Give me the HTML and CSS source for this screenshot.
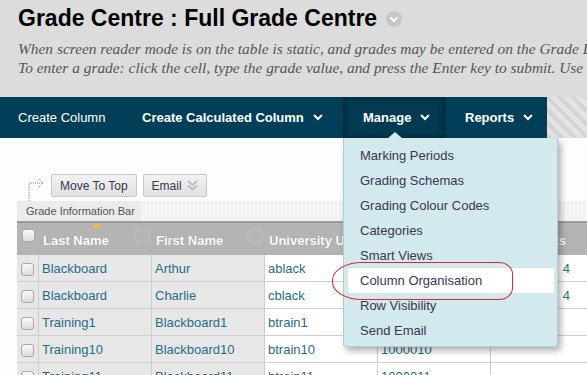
FILE: index.html
```html
<!DOCTYPE html>
<html lang="en">
<head>
  <meta charset="UTF-8" />
  <meta name="viewport" content="width=device-width, initial-scale=1.0"/>
  <title>Full Grade Centre</title>
  <link rel="stylesheet" href="styles.css">
</head>
<body>

<div class="page-header">
  <h1>Grade Centre : Full Grade Centre
    <span class="title-menu">
      <svg width="16" height="16" viewBox="0 0 16 16"><circle cx="8" cy="8" r="8" fill="#c6c6c6"/><polyline points="4.5,6.5 8,10 11.5,6.5" fill="none" stroke="#fff" stroke-width="2"/></svg>
    </span>
  </h1>
  <p class="instructions">When screen reader mode is on the table is static, and grades may be entered on the Grade Details page.<br>To enter a grade: click the cell, type the grade value, and press the Enter key to submit. Use the arrow keys to move.</p>
</div>

<div class="action-bar">
  <a class="action first">Create Column</a>
  <a class="action bold calc">Create Calculated Column <svg class="chev" width="10" height="7" viewBox="0 0 10 7"><polyline points="1,1 5,5 9,1" fill="none" stroke="#fff" stroke-width="2"/></svg></a>
  <a class="action bold tab active">Manage <svg class="chev" width="10" height="7" viewBox="0 0 10 7"><polyline points="1,1 5,5 9,1" fill="none" stroke="#fff" stroke-width="2"/></svg></a>
  <a class="action bold tab">Reports <svg class="chev" width="10" height="7" viewBox="0 0 10 7"><polyline points="1,1 5,5 9,1" fill="none" stroke="#fff" stroke-width="2"/></svg></a>
  <div class="hatch"></div>
</div>

<div class="content">
  <div class="toolbar">
    <svg class="move-arrow" width="18" height="23" viewBox="0 0 18 23">
      <polyline points="2,27 2,9 16,9" fill="none" stroke="#8a8a8a" stroke-width="1" stroke-dasharray="1 1"/>
      <polyline points="12,5 16,9 12,13" fill="none" stroke="#8a8a8a" stroke-width="1" stroke-dasharray="1 1"/>
    </svg>
    <button class="btn">Move To Top</button>
    <button class="btn">Email
      <svg class="dbl" width="11" height="11" viewBox="0 0 11 11"><polyline points="1,1 5.5,5 10,1" fill="none" stroke="#bdbdbd" stroke-width="2"/><polyline points="1,5.5 5.5,9.5 10,5.5" fill="none" stroke="#bdbdbd" stroke-width="2"/></svg>
    </button>
  </div>

  <div class="info-bar">
    <span class="info-label">Grade Information Bar</span>
    <span class="info-rest"></span>
  </div>

  <table class="grid">
    <colgroup>
      <col class="w-check"><col class="w-col"><col class="w-col"><col class="w-col"><col class="w-col"><col class="w-last"><col class="w-rest">
    </colgroup>
    <thead>
      <tr>
        <th class="chk"><span class="box"></span></th>
        <th class="sorted">Last Name<span class="sort-mark"></span><span class="sort-ico"></span></th>
        <th>First Name<span class="sort-ico"></span></th>
        <th>University Username</th>
        <th>Student ID</th>
        <th class="right">Attempts</th>
        <th class="rest"></th>
      </tr>
    </thead>
    <tbody>
      <tr><td class="chk"><span class="box"></span></td><td class="grey">Blackboard</td><td class="grey">Arthur</td><td>ablack</td><td>1000001</td><td class="right">4</td><td class="rest"></td></tr>
      <tr><td class="chk"><span class="box"></span></td><td class="grey">Blackboard</td><td class="grey">Charlie</td><td>cblack</td><td>1000002</td><td class="right">4</td><td class="rest"></td></tr>
      <tr><td class="chk"><span class="box"></span></td><td class="grey">Training1</td><td class="grey">Blackboard1</td><td>btrain1</td><td>1000009</td><td class="right"></td><td class="rest"></td></tr>
      <tr><td class="chk"><span class="box"></span></td><td class="grey">Training10</td><td class="grey">Blackboard10</td><td>btrain10</td><td>1000010</td><td class="right"></td><td class="rest"></td></tr>
      <tr><td class="chk"><span class="box"></span></td><td class="grey">Training11</td><td class="grey">Blackboard11</td><td>btrain11</td><td>1000011</td><td class="right"></td><td class="rest"></td></tr>
    </tbody>
  </table>

  <ul class="manage-menu">
    <li>Marking Periods</li>
    <li>Grading Schemas</li>
    <li>Grading Colour Codes</li>
    <li>Categories</li>
    <li>Smart Views</li>
    <li class="current">Column Organisation</li>
    <li>Row Visibility</li>
    <li>Send Email</li>
  </ul>

  <div class="highlight-ring"></div>
</div>

</body>
</html>
```

FILE: styles.css
```css
html, body {
  overflow: hidden;
}
body {
  margin: 0;
  font-family: "Liberation Sans", Arial, sans-serif;
  background-color: #fdfdfd;
  width: 587px;
  height: 375px;
}
.page-header {
  background-color: #dcdcdc;
  height: 97px;
  box-sizing: border-box;
  padding: 4px 0 0 18px;
  white-space: nowrap;
  overflow: hidden;
}
h1 {
  margin: 0;
  font-size: 23px;
  line-height: 28px;
  color: #000;
  display: flex;
  align-items: center;
}
.title-menu {
  display: inline-flex;
  margin-left: 9px;
  margin-top: 1px;
}
.instructions {
  margin: 7px 0 0;
  font-family: "Liberation Serif", "Times New Roman", serif;
  font-style: italic;
  font-size: 15.4px;
  line-height: 19px;
  color: #555;
}

/* action bar */
.action-bar {
  display: flex;
  height: 41px;
  background-color: #003f57;
  white-space: nowrap;
}
.action {
  display: flex;
  align-items: center;
  box-sizing: border-box;
  color: #fff;
  font-size: 13px;
  padding: 0 0 0 18px;
  cursor: pointer;
}
.action.first {
  width: 123px;
}
.action.bold {
  font-weight: bold;
}
.action.calc {
  width: 220px;
  padding-left: 19px;
}
.action.tab {
  width: 102px;
  padding-left: 19px;
  border-left: 1px solid #022f42;
}
.action.tab.active {
  background-color: #023a51;
  border-right: 1px solid #022a3b;
  box-shadow: inset 0 0 6px rgba(0,0,0,0.35);
}
.chev {
  margin-left: 9px;
}
.hatch {
  flex: 1;
  background: repeating-linear-gradient(45deg, #d4d4d4 0 4px, #e4e4e4 4px 9px);
}

/* content */
.content {
  position: relative;
}
.toolbar {
  display: flex;
  align-items: center;
  gap: 6px;
  padding: 36px 0 0 27px;
  height: 23px;
}
.move-arrow {
  overflow: visible;
}
.btn {
  height: 23px;
  padding: 0 8px;
  font-family: "Liberation Sans", Arial, sans-serif;
  font-size: 12px;
  color: #3a3553;
  background: linear-gradient(#f3f3f3, #e1e1e1);
  border: 1px solid #c8c8c8;
  border-radius: 2px;
  display: flex;
  align-items: center;
}
.btn .dbl {
  margin-left: 5px;
}
.info-bar {
  display: flex;
  margin: 4px 0 0 17px;
  height: 20px;
}
.info-label {
  background-color: #ebebeb;
  color: #555;
  font-size: 11px;
  line-height: 21px;
  padding: 0 9px;
  width: 106px;
  white-space: nowrap;
}
.info-rest {
  flex: 1;
  background: repeating-linear-gradient(90deg, #f7f5f5 0 2px, #f2f0f0 2px 4px);
}

/* grid */
.grid {
  margin-left: 17px;
  border-collapse: separate;
  border-spacing: 0;
  table-layout: fixed;
  width: 700px;
  font-size: 13px;
}
.w-check { width: 22px; }
.w-col { width: 113px; }
.w-last { width: 80px; }
.grid th {
  position: relative;
  height: 30px;
  background-color: #b4b4b4;
  border-top: 2px solid #9b9b9b;
  color: #fff;
  font-weight: bold;
  text-align: left;
  padding: 2px 4px 0;
  white-space: nowrap;
  overflow: hidden;
  text-shadow: 0 0 1px #8a8a8a;
}
.grid th.right {
  text-align: right;
  padding-right: 5px;
}
.grid td {
  height: 26px;
  padding: 0 3px;
  border-right: 1px solid #cfcfcf;
  border-bottom: 1px solid #cfcfcf;
  background-color: #fff;
  color: #1f6d89;
  white-space: nowrap;
  overflow: hidden;
}
.grid td.right {
  text-align: right;
  padding-right: 1px;
  border-right: 0;
}
.grid td.grey, .grid td.chk {
  background-color: #e7e7e7;
}
.grid td.rest {
  border-right: 0;
}
.grid .chk {
  padding: 0;
  text-align: center;
}
.grid th.chk {
  vertical-align: top;
  padding-top: 4px;
  height: 28px;
}
.box {
  display: inline-block;
  width: 11px;
  height: 11px;
  border: 1px solid #a9a9a9;
  border-radius: 3px;
  background: linear-gradient(#fafafa, #dcdcdc);
  vertical-align: middle;
}
.sort-mark {
  position: absolute;
  top: 0;
  left: 53px;
  border-left: 5px solid transparent;
  border-right: 5px solid transparent;
  border-bottom: 5px solid #f3b73e;
}
.sort-ico {
  position: absolute;
  right: 2px;
  top: 5px;
  width: 14px;
  height: 14px;
  border: 1px dotted #cfcfcf;
  border-radius: 50%;
}

/* manage dropdown */
.manage-menu {
  position: absolute;
  top: 0;
  left: 343px;
  width: 215px;
  box-sizing: border-box;
  margin: 0;
  padding: 5px 3px 3px 4px;
  list-style: none;
  background-color: #d2e9ed;
  border: 1px solid #b8cbcf;
  border-top: 0;
  border-radius: 0 0 3px 3px;
  box-shadow: 3px 4px 6px rgba(0,0,0,0.3);
  z-index: 2;
}
.manage-menu::before {
  content: "";
  position: absolute;
  top: -6px;
  left: 44px;
  border-left: 7px solid transparent;
  border-right: 7px solid transparent;
  border-bottom: 6px solid #d2e9ed;
}
.manage-menu li {
  height: 25px;
  line-height: 25px;
  padding-left: 12px;
  font-size: 13px;
  color: #3b3552;
}
.manage-menu li.current {
  background-color: #fff;
}
.highlight-ring {
  position: absolute;
  left: 332px;
  top: 124px;
  width: 179px;
  height: 36px;
  border: 1px solid #e3262b;
  border-radius: 30px 14px 14px 30px / 18px 12px 12px 18px;
  z-index: 3;
}
```
